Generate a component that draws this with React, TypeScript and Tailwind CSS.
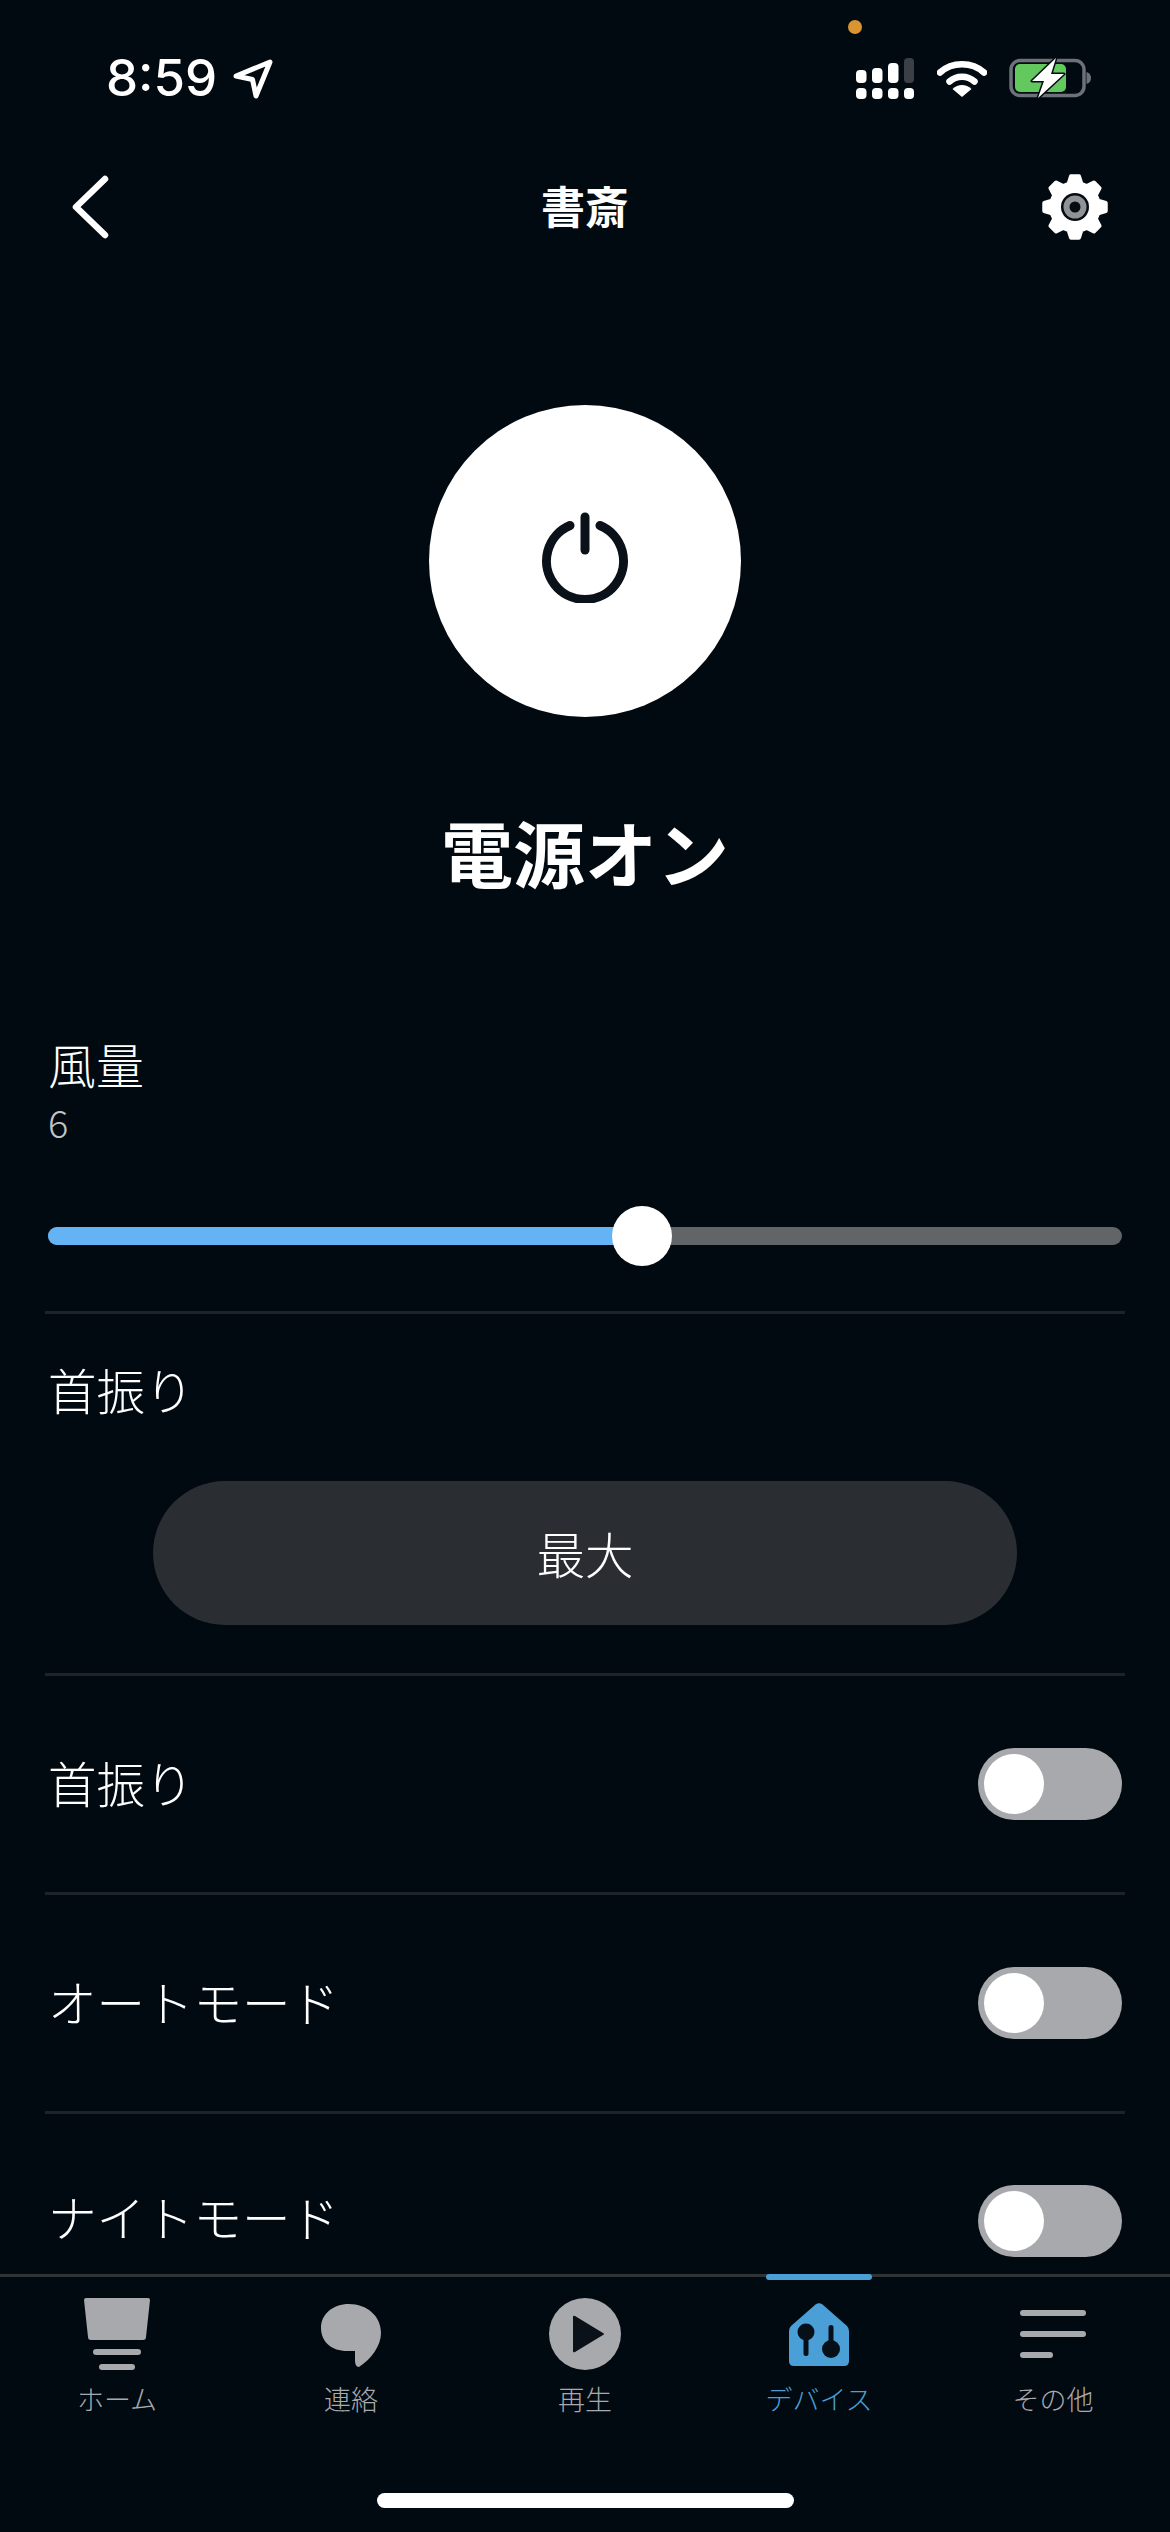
import React from "react";

function Gear() {
  const cx = 34, cy = 34;
  const pts: string[] = [];
  for (let i = 0; i < 8; i++) {
    const a = (i * Math.PI) / 4 - Math.PI / 2;
    const p = (r: number, d: number) => {
      const t = a + d;
      return `${(cx + r * Math.cos(t)).toFixed(2)},${(cy + r * Math.sin(t)).toFixed(2)}`;
    };
    pts.push(p(24, -0.27), p(31, -0.13), p(31, 0.13), p(24, 0.27));
  }
  return (
    <svg width="68" height="68" viewBox="0 0 68 68">
      <polygon points={pts.join(" ")} fill="#fff" stroke="#fff" strokeWidth="4" strokeLinejoin="round" />
      <circle cx={cx} cy={cy} r="14" fill="#050b11" />
      <circle cx={cx} cy={cy} r="11.5" fill="#8f9296" />
      <circle cx={cx} cy={cy} r="5.5" fill="#050b11" />
    </svg>
  );
}

function StatusIcons() {
  return (
    <div className="flex items-center">
      <svg width="58" height="41" viewBox="0 0 58 41" className="mr-[23px]">
        <rect x="0" y="12" width="10.5" height="13" rx="4" fill="#fff" />
        <rect x="16" y="10" width="10.5" height="15" rx="4" fill="#fff" />
        <rect x="32" y="5" width="10.5" height="20" rx="4" fill="#fff" />
        <rect x="48" y="0" width="10" height="25" rx="4" fill="#3b4046" />
        <rect x="0" y="30" width="10.5" height="11" rx="4" fill="#fff" />
        <rect x="16" y="30" width="10.5" height="11" rx="4" fill="#fff" />
        <rect x="32" y="30" width="10.5" height="11" rx="4" fill="#fff" />
        <rect x="48" y="30" width="10" height="11" rx="4" fill="#fff" />
      </svg>
      <svg width="50" height="38" viewBox="0 0 50 38" className="mr-[22px]">
        <path d="M3 13.5 C15 2.5 35 2.5 47 13.5" fill="none" stroke="#fff" strokeWidth="6.5" strokeLinecap="round" />
        <path d="M12.5 22.5 C19.5 16 30.5 16 37.5 22.5" fill="none" stroke="#fff" strokeWidth="6.5" strokeLinecap="round" />
        <path d="M15.5 30 C21 24.5 29 24.5 34.5 30 L25 38 Z" fill="#fff" />
      </svg>
      <svg width="82" height="42" viewBox="0 0 82 42">
        <rect x="2" y="3.5" width="73" height="35" rx="9" fill="none" stroke="#6d7278" strokeWidth="3.5" />
        <rect x="6" y="7" width="51" height="28" rx="5" fill="#63c95e" />
        <path d="M77.5 15 C81 16 82 19 82 21 C82 23 81 26 77.5 27 Z" fill="#6d7278" />
        <path d="M47 1 L23 24 H35 L29 41 L55 17 H42 Z" fill="#fff" stroke="#050b11" strokeWidth="3" strokeLinejoin="round" paintOrder="stroke" />
      </svg>
    </div>
  );
}

function Divider() {
  return <div className="mx-[45px] h-[3px] shrink-0 bg-[#1d2329]" />;
}

function ToggleRow({ label }: { label: string }) {
  return (
    <>
      <div className="flex h-[216px] shrink-0 items-center justify-between px-[48px]">
        <span className="mb-[5px] text-[48.5px] font-light leading-[66px] text-white">{label}</span>
        <div className="flex h-[72px] w-[144px] items-center rounded-full bg-[#a7a9ac] pl-[6px]">
          <div className="h-[60px] w-[60px] rounded-full bg-white" />
        </div>
      </div>
      <Divider />
    </>
  );
}

function Tab({ label, active, icon }: { label: string; active?: boolean; icon: React.ReactNode }) {
  return (
    <div className="relative flex w-[234px] flex-col items-center">
      {active && <div className="absolute left-[64px] top-[-3px] h-[6px] w-[106px] rounded-full bg-[#4a9fd6]" />}
      <div className="mt-[21px] flex h-[72px] items-center justify-center">{icon}</div>
      <span className={active ? "mt-[11px] text-[27px] font-light leading-[36px] text-[#4a9fd6]" : "mt-[11px] text-[27px] font-light leading-[36px] text-[#a7a9ac]"}>
        {label}
      </span>
    </div>
  );
}

export default function App() {
  return (
    <div className="flex h-[2532px] w-[1170px] flex-col overflow-hidden bg-[#020a11] font-['Noto_Sans_CJK_JP','Noto_Sans',sans-serif] text-white">
      <div className="relative flex h-[156px] shrink-0 items-center justify-between pl-[106px] pr-[79px]">
        <div className="absolute left-[848px] top-[20px] h-[14px] w-[14px] rounded-full bg-[#d9952f]" />
        <div className="flex items-center gap-[16px]">
          <span className="font-['Inter',sans-serif] text-[51px] font-medium leading-[56px]">8:59</span>
          <svg width="40" height="40" viewBox="0 0 40 40" className="mt-[2px]">
            <path d="M3 17 L37 3 L23 37 L19.5 20.5 Z" fill="none" stroke="#fff" strokeWidth="5" strokeLinejoin="round" />
          </svg>
        </div>
        <StatusIcons />
      </div>

      <div className="flex h-[102px] shrink-0 items-center justify-between px-[61px]">
        <div className="w-[68px] pl-[9px]">
          <svg width="40" height="64" viewBox="0 0 40 64" className="block">
            <path d="M35 4 L6 32 L35 60" fill="none" stroke="#fff" strokeWidth="6.5" strokeLinecap="round" strokeLinejoin="round" />
          </svg>
        </div>
        <span className="mb-[5px] text-[44px] font-bold leading-[56px]">書斎</span>
        <Gear />
      </div>

      <div className="mt-[147px] flex shrink-0 flex-col items-center">
        <div className="flex h-[312px] w-[312px] items-center justify-center rounded-full bg-white">
          <svg width="90" height="92" viewBox="0 0 90 92" className="mb-[8px]">
            <path d="M30 14.5 A38.5 38.5 0 1 0 60 14.5" fill="none" stroke="#0a1118" strokeWidth="9" strokeLinecap="round" />
            <path d="M45 6 V39" fill="none" stroke="#0a1118" strokeWidth="9" strokeLinecap="round" />
          </svg>
        </div>
        <div className="mt-[86px] text-[72px] font-bold leading-[96px]">電源オン</div>
      </div>

      <div className="mt-[131px] shrink-0 px-[48px]">
        <div className="text-[48px] font-light leading-[66px]">風量</div>
        <div className="mt-[1px] text-[38px] font-light leading-[50px] text-[#c2c4c6]">6</div>
        <div className="relative mt-[80px] flex h-[18px] w-[1074px] overflow-visible rounded-full bg-[#616568]">
          <div className="h-[18px] w-[594px] rounded-l-full bg-[#63b3f5]" />
          <div className="absolute left-[564px] top-[-21px] h-[60px] w-[60px] rounded-full bg-white" />
        </div>
      </div>
      <div className="mt-[66px]" />
      <Divider />

      <div className="flex shrink-0 flex-col">
        <div className="mt-[42px] px-[48px] text-[48.5px] font-light leading-[66px]">首振り</div>
        <div className="mx-auto mt-[59px] flex h-[144px] w-[864px] items-center justify-center rounded-full bg-[#2a2e32] text-[48.5px] font-light leading-[66px]">
          最大
        </div>
        <div className="mt-[48px]" />
      </div>
      <Divider />

      <ToggleRow label="首振り" />
      <ToggleRow label="オートモード" />
      <div className="flex h-[160px] shrink-0 items-start justify-between overflow-hidden px-[48px] pt-[71px]">
        <span className="-mt-[2px] text-[48.5px] font-light leading-[66px] text-white">ナイトモード</span>
        <div className="flex h-[72px] w-[144px] items-center rounded-full bg-[#a7a9ac] pl-[6px]">
          <div className="h-[60px] w-[60px] rounded-full bg-white" />
        </div>
      </div>

      <div className="relative flex h-[258px] shrink-0 flex-col border-t-[3px] border-[#2e3338]">
        <div className="flex">
          <Tab
            label="ホーム"
            icon={
              <svg width="66" height="72" viewBox="0 0 66 72">
                <path d="M2 0 H64 Q66 0 66 2 L62 39 Q62 42 59 42 H7 Q4 42 4 39 L0 2 Q0 0 2 0 Z" fill="#a7a9ac" />
                <rect x="9" y="51" width="48" height="6" rx="3" fill="#a7a9ac" />
                <rect x="15" y="66" width="36" height="6" rx="3" fill="#a7a9ac" />
              </svg>
            }
          />
          <Tab
            label="連絡"
            icon={
              <svg width="60" height="63" viewBox="0 0 60 63" className="mt-[3px]">
                <path d="M28 0 C46 0 60 12 60 29 C60 42 50 55 38 63 C35 63 34 60 34 56 L34 47 L26 47 C11 47 0 38 0 24 C0 10 12 0 28 0 Z" fill="#a7a9ac" />
              </svg>
            }
          />
          <Tab
            label="再生"
            icon={
              <svg width="72" height="72" viewBox="0 0 72 72">
                <circle cx="36" cy="36" r="36" fill="#a7a9ac" />
                <path d="M24 19 Q24 17 26 18 L54 35 Q56 36 54 37 L26 54 Q24 55 24 53 Z" fill="#0a1118" />
              </svg>
            }
          />
          <Tab
            label="デバイス"
            active
            icon={
              <svg width="60" height="63" viewBox="0 0 60 63">
                <path d="M26.5 1.5 Q30 -1 33.5 1.5 L58 23 Q60 25 60 28 V58 Q60 63 55 63 H5 Q0 63 0 58 V28 Q0 25 2 23 Z" fill="#4a9fd6" />
                <circle cx="17" cy="29" r="8.5" fill="#061019" />
                <rect x="14.5" y="29" width="5" height="24" rx="2.5" fill="#061019" />
                <circle cx="42" cy="46" r="9" fill="#061019" />
                <rect x="39.5" y="22" width="5" height="24" rx="2.5" fill="#061019" />
              </svg>
            }
          />
          <Tab
            label="その他"
            icon={
              <svg width="66" height="48" viewBox="0 0 66 48">
                <rect x="0" y="0" width="66" height="6" rx="3" fill="#a7a9ac" />
                <rect x="0" y="21" width="66" height="6" rx="3" fill="#a7a9ac" />
                <rect x="0" y="42" width="33" height="6" rx="3" fill="#a7a9ac" />
              </svg>
            }
          />
        </div>
        <div className="absolute left-[377px] top-[216px] h-[15px] w-[417px] rounded-full bg-white" />
      </div>
    </div>
  );
}
